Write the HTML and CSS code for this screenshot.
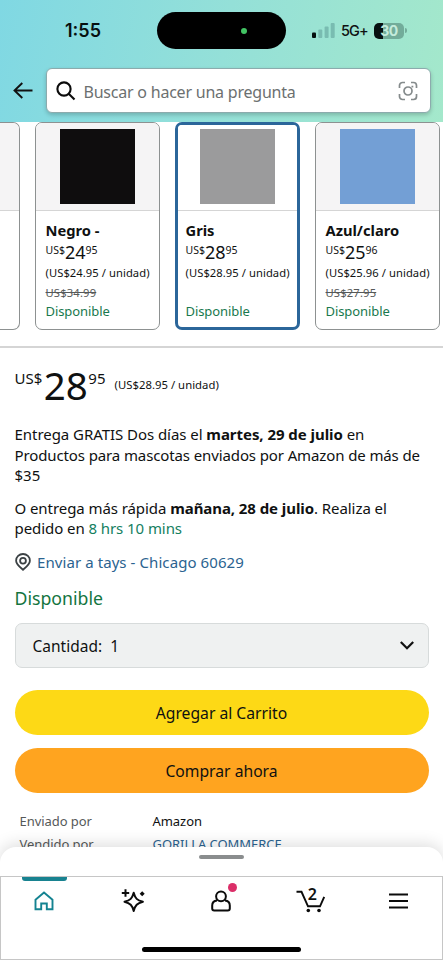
FILE: index.html
```html
<!DOCTYPE html>
<html lang="es">
<head>
<meta charset="utf-8">
<title>Producto</title>
<link rel="stylesheet" href="styles.css">
</head>
<body>
<div class="app">
  <header class="header">
    <div class="status">
      <span class="time">1:55</span>
      <div class="island"><i class="cam"></i></div>
      <div class="indicators">
        <svg class="signal" width="23" height="15" viewBox="0 0 23 15"><rect x="0" y="9.500" width="4" height="5.500" rx="1" fill="#050f0e"/><rect x="6.3" y="6.5" width="4" height="8.5" rx="1" fill="#79bcb1"/><rect x="12.6" y="3.5" width="4" height="11.5" rx="1" fill="#79bcb1"/><rect x="18.7" y="0" width="4" height="15" rx="1" fill="#79bcb1"/></svg>
        <span class="net">5G+</span>
        <div class="battery"><span>30</span></div>
        <i class="nub"></i>
      </div>
    </div>
    <div class="search-row">
      <svg class="back" width="20" height="17" viewBox="0 0 20 17" fill="none" stroke="#111" stroke-width="1.9"><path d="M9.3 1 1.500 8.500l7.800 7.500M1.500 8.500H19.500"/></svg>
      <div class="search">
        <svg width="20" height="20" viewBox="0 0 20 20" fill="none" stroke="#0b0b0b" stroke-width="2.1"><circle cx="8" cy="8" r="6.6"/><path d="m12.7 12.7 5.8 5.8"/></svg>
        <span class="placeholder">Buscar o hacer una pregunta</span>
        <svg class="lens" width="20" height="20" viewBox="0 0 20 20" fill="none" stroke="#858b8c" stroke-width="1.7"><path d="M1.500 7V4.500a3 3 0 0 1 3-3H7M13 1.500h2.500a3 3 0 0 1 3 3V7M18.500 13v2.500a3 3 0 0 1-3 3H13M7 18.500H4.500a3 3 0 0 1-3-3V13"/><circle cx="10" cy="10" r="4"/><path d="M13.500 5.600h1.800"/></svg>
      </div>
    </div>
  </header>

  <section class="variants">
    <article class="card"><div class="swatch"></div></article>
    <article class="card">
      <div class="swatch"><i class="black"></i></div>
      <div class="info">
        <h3>Negro -</h3>
        <div class="price"><small>US$</small><b>24</b><small>95</small></div>
        <p class="unit">(US$24.95 / unidad)</p>
        <p class="old">US$34.99</p>
        <p class="stock">Disponible</p>
      </div>
    </article>
    <article class="card selected">
      <div class="swatch"><i class="gray"></i></div>
      <div class="info">
        <h3>Gris</h3>
        <div class="price"><small>US$</small><b>28</b><small>95</small></div>
        <p class="unit">(US$28.95 / unidad)</p>
        <p class="old"></p>
        <p class="stock">Disponible</p>
      </div>
    </article>
    <article class="card">
      <div class="swatch"><i class="blue"></i></div>
      <div class="info">
        <h3>Azul/claro</h3>
        <div class="price"><small>US$</small><b>25</b><small>96</small></div>
        <p class="unit">(US$25.96 / unidad)</p>
        <p class="old">US$27.95</p>
        <p class="stock">Disponible</p>
      </div>
    </article>
  </section>

  <main class="buy">
    <div class="main-price"><span class="cur">US$</span><span class="whole">28</span><span class="cents">95</span><span class="per">(US$28.95 / unidad)</span></div>
    <p class="delivery"><span class="l1">Entrega GRATIS Dos días el <b>martes, 29 de julio</b> en</span><br><span class="l2">Productos para mascotas enviados por Amazon de más de</span><br>$35</p>
    <p class="delivery fast">O entrega más rápida <b>mañana, 28 de julio</b>. Realiza el<br>pedido en <span class="green">8 hrs 10 mins</span></p>
    <div class="address">
      <svg width="16" height="18" viewBox="0 0 16 18" fill="none" stroke="#3b4144" stroke-width="1.800"><path d="M8 16.700C5.500 14.600 1.100 11.400 1.100 7.700a6.900 6.700 0 0 1 13.800 0C14.900 11.400 10.500 14.600 8 16.700Z"/><circle cx="8" cy="7.700" r="2.900"/></svg>
      <span>Enviar a tays - Chicago 60629</span>
    </div>
    <p class="available">Disponible</p>
    <div class="qty"><span>Cantidad:&nbsp; 1</span>
      <svg width="14" height="9" viewBox="0 0 14 9" fill="none" stroke="#111" stroke-width="2.200"><path d="m.8 1 6.200 6.300L13.200 1"/></svg>
    </div>
    <button class="btn cart">Agregar al Carrito</button>
    <button class="btn now">Comprar ahora</button>
    <dl class="seller">
      <dt>Enviado por</dt><dd>Amazon</dd>
      <dt>Vendido por</dt><dd class="link">GORILLA COMMERCE</dd>
    </dl>
  </main>

  <footer class="dock">
    <div class="sheet"><i></i></div>
    <nav class="tabs">
      <a class="tab active"><svg width="20" height="20" viewBox="0 0 20 20" fill="none" stroke="#148391" stroke-width="1.900"><path d="M1.500 8.800 10 1.500l8.500 7.300v9.400H12.800V12.500H7.200v5.700H1.500Z"/></svg></a>
      <a class="tab"><svg width="24" height="24" viewBox="0 0 24 24" fill="none" stroke="#0b0b0b" stroke-width="2"><path stroke-linejoin="round" d="M12.700 3.800c1.500 5.700 3.400 7.500 9.200 9-5.800 1.500-7.700 3.500-9.200 9.200-1.500-5.700-3.400-7.700-9.200-9.200C9.300 11.300 11.200 9.500 12.700 3.800Z"/><path d="M4.500.300v7.400M.8 4h7.400"/><path d="m21.200 2.300 2.500 2.500-2.500 2.500-2.500-2.500Z" fill="#0b0b0b" stroke="none"/></svg></a>
      <a class="tab"><svg width="20" height="22" viewBox="0 0 20 22" fill="none" stroke="#0b0b0b" stroke-width="2"><circle cx="10" cy="6.300" r="4.900"/><path d="M6 10.400c-3 .3-4.800 2.100-4.800 5v3q0 2 2 2h13.600q2 0 2-2v-3C18.800 12.500 17 10.700 14 10.400"/></svg><i class="dot"></i></a>
      <a class="tab"><svg width="29" height="24" viewBox="0 0 29 24" fill="none" stroke="#0b0b0b" stroke-width="1.900"><path d="M.500 2.800H5.500L12 17.300h12L28.200 8"/><circle cx="12.300" cy="21.500" r="1.800" fill="#0b0b0b" stroke="none"/><circle cx="23" cy="21.500" r="1.800" fill="#0b0b0b" stroke="none"/></svg><span class="count">2</span></a>
      <a class="tab"><svg width="19" height="16" viewBox="0 0 19 16" stroke="#0b0b0b" stroke-width="2"><path d="M0 1.500h19M0 8h19M0 14.500h19"/></svg></a>
    </nav>
    <i class="home-bar"></i>
  </footer>
</div>
</body>
</html>
```
FILE: styles.css
```css
* { box-sizing: border-box; }
body { margin: 0; background: #fff; color: #0f1111; font-family: "Noto Sans", sans-serif; }
h3, p, dl, dd { margin: 0; }
i { display: block; }
svg { display: block; flex: none; }
.app { position: relative; width: 443px; height: 960px; overflow: hidden; background: #fff; white-space: nowrap; }

.header { height: 122px; background: linear-gradient(100deg, #80d8e3 0%, #94e0d8 50%, #a4e8cb 100%); }
.status { height: 68px; display: grid; grid-template-columns: 157px 129px 1fr; padding-top: 12px; }
.time { font: 600 18px/37px Inter, sans-serif; padding-left: 65px; color: #071010; }
.island { height: 37px; border-radius: 19px; background: #000; display: flex; align-items: center; padding-left: 84px; }
.cam { width: 6px; height: 6px; border-radius: 50%; background: #42c463; }
.indicators { height: 37px; display: flex; align-items: center; padding-left: 26px; }
.net { width: 27px; margin-left: 6px; font: 500 14.500px/20px Inter, sans-serif; letter-spacing: -.9px; }
.battery { width: 30px; height: 16px; margin-left: 6px; border-radius: 5px; background: linear-gradient(90deg, #071010 30%, #72ac9a 30%); text-align: center; color: #c4ebdc; font: 700 14px/16px Inter, sans-serif; letter-spacing: -.5px; }
.nub { width: 2px; height: 5px; margin-left: 1px; border-radius: 0 2px 2px 0; background: #72ac9a; }
.search-row { display: flex; align-items: center; padding-left: 13px; gap: 13px; }
.search { width: 385px; height: 45px; display: flex; align-items: center; padding: 0 12px 0 9px; background: #fff; border: 1px solid #8cabad; border-radius: 6px; box-shadow: 0 2px 4px #0003; }
.back { margin-right: -.500px; }
.placeholder { flex: 1; margin-left: 8px; padding-top: 2px; font-size: 16px; letter-spacing: -.22px; color: #6c7070; }

.variants { height: 226px; display: grid; grid-template-columns: 19.500px 124.500px 124.500px 124.500px; column-gap: 15.500px; border-bottom: 2px solid #d5d5d5; }
.card { height: 208px; border: 1px solid #8d9191; border-radius: 7px; overflow: hidden; background: #fff; }
.card:first-child { border-left: 0; border-radius: 0 7px 7px 0; }
.swatch { height: 88px; padding-top: 6px; background: #f5f4f5; border-bottom: 1px solid #d5d5d5; }
.swatch i { width: 75px; height: 75px; margin: 0 auto; }
.black { background: #0f0d0e; }
.gray { background: #9b9b9c; }
.blue { background: #739fd5; }
.selected { border: 3px solid #2b669a; }
.selected .swatch { height: 86px; padding-top: 4px; background: #fff; }
.info { padding: 9px 0 0 9.500px; }
.selected .info { padding-left: 7.500px; }
.info h3 { font-size: 14.700px; line-height: 20px; }
.price { height: 22px; display: flex; }
.price small { font-size: 10.500px; line-height: 20px; }
.price b { font-size: 18px; line-height: 24px; font-weight: 400; }
.unit { font-size: 11.200px; line-height: 22px; letter-spacing: .07px; }
.old { height: 17px; font-size: 11.200px; line-height: 17px; letter-spacing: .18px; color: #565959; text-decoration: line-through; }
.stock { font-size: 13px; line-height: 20px; letter-spacing: -.07px; color: #18794e; }

.buy { padding: 0 14.500px; }
.main-price { height: 76px; display: flex; }
.cur, .cents { font-size: 15px; line-height: 61px; }
.whole { margin-left: 1.500px; font-size: 38.500px; line-height: 75px; }
.cents { margin-left: .500px; }
.per { margin-left: 9px; font-size: 11.300px; line-height: 74px; letter-spacing: .03px; }
.delivery { font-size: 15px; line-height: 20.600px; }
.l1 { letter-spacing: -.050px; }
.l2 { letter-spacing: -.115px; }
.fast { margin-top: 12px; letter-spacing: -.070px; }
.green { color: #14805f; }
.address { height: 20px; margin-top: 13px; display: flex; align-items: center; gap: 6.500px; font-size: 15px; letter-spacing: .080px; color: #2b6390; }
.available { margin-top: 14px; font-size: 17.700px; line-height: 24px; color: #14753f; }
.qty { height: 45px; margin: 13px 0 0; display: flex; align-items: center; justify-content: space-between; padding: 0 14px 0 17px; border: 1px solid #d7dbdb; border-radius: 7px; background: #eff1f1; font-size: 15.500px; }
.qty span { padding-top: 1px; }
.btn { display: block; width: 414px; height: 45px; margin: 22px 0 0; padding: 1px 0 0; border: 0; border-radius: 23px; font: 15.700px/44px "Noto Sans", sans-serif; color: #0f1111; }
.cart { background: #fdd916; }
.now { margin-top: 13px; background: #ffa41f; }
.seller { margin: 17px 5px 0; display: grid; grid-template-columns: 133px 1fr; font-size: 13px; line-height: 23px; letter-spacing: -.050px; }
.seller dt { color: #565959; }
.link { color: #2b6390; }

.dock { position: absolute; left: 0; bottom: 0; width: 443px; height: 113px; }
.sheet { height: 29px; padding-top: 8px; border-radius: 16px 16px 0 0; background: #fff; box-shadow: 0 -3px 16px #0002; }
.sheet i { width: 45px; height: 4px; margin: 0 auto; border-radius: 2px; background: #8a8d8e; }
.tabs { height: 84px; display: grid; grid-template-columns: repeat(5, 88.600px); border: 1px solid #c6c6c6; background: #fff; }
.tab { position: relative; height: 48px; display: flex; align-items: center; justify-content: center; padding-right: 2px; }
.active::before { content: ""; position: absolute; left: 21px; top: 0; width: 45px; height: 4px; border-radius: 0 0 3px 3px; background: #188290; }
.dot { position: absolute; left: 50px; top: 6px; width: 9px; height: 9px; border-radius: 50%; background: #db2e68; }
.count { position: absolute; left: 41px; top: 7px; font: 600 16px/20px "Noto Sans", sans-serif; }
.home-bar { position: absolute; left: 142px; bottom: 8px; width: 159px; height: 5px; border-radius: 3px; background: #000; }
```
